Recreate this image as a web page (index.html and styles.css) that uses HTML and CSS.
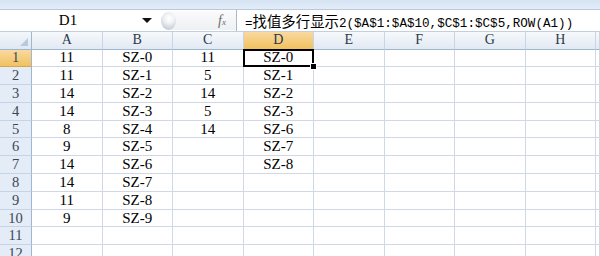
FILE: index.html
```html
<!DOCTYPE html>
<html lang="zh-CN">
<head>
    <meta charset="UTF-8">
    <meta name="viewport" content="width=device-width, initial-scale=1.0">
    <title>找值多行显示</title>

    <link rel="stylesheet" href="styles.css">
</head>
<body>

    <div class="ribbon"></div>

    <div class="formula-bar">
        <div class="name-box">D1</div>
        <div class="name-arrow"></div>
        <div class="fx-area">
            <span class="grip"></span>
            <span class="fx">f<small>x</small></span>
        </div>
        <div class="formula">=<span class="cjk">找值多行显示</span>2($A$1:$A$10,$C$1:$C$5,ROW(A1))</div>
    </div>

    <div id="sheet" class="sheet"></div> <!-- grid is built below -->

    <script>
        const columns = ['A', 'B', 'C', 'D', 'E', 'F', 'G', 'H', ''];

        // Values by column, row 1 first
        const data = {
            A: [11, 11, 14, 14, 8, 9, 14, 14, 11, 9],
            B: ['SZ-0', 'SZ-1', 'SZ-2', 'SZ-3', 'SZ-4', 'SZ-5', 'SZ-6', 'SZ-7', 'SZ-8', 'SZ-9'],
            C: [11, 5, 14, 5, 14],
            D: ['SZ-0', 'SZ-1', 'SZ-2', 'SZ-3', 'SZ-6', 'SZ-7', 'SZ-8']
        };

        const sheet = document.getElementById('sheet');

        // Header row
        const corner = document.createElement('div');
        corner.className = 'corner';
        sheet.appendChild(corner);

        columns.forEach(col => {
            const head = document.createElement('div');
            head.className = 'col-head' + (col === 'D' ? ' active' : '');
            head.textContent = col;
            sheet.appendChild(head);
        });

        // Data rows
        for (let r = 1; r <= 12; r++) {
            const rowHead = document.createElement('div');
            rowHead.className = 'row-head' + (r === 1 ? ' active' : '');
            rowHead.textContent = r;
            sheet.appendChild(rowHead);

            columns.forEach(col => {
                const cell = document.createElement('div');
                cell.className = 'cell';
                if (col === 'D' && r === 1) cell.className += ' selected';
                const values = data[col];
                if (values && values[r - 1] !== undefined) {
                    cell.textContent = values[r - 1];
                }
                sheet.appendChild(cell);
            });
        }
    </script>
</body>
</html>
```

FILE: styles.css
```css
body {
    font-family: 'Liberation Serif', 'Noto Sans CJK SC', serif;
    margin: 0;
    padding: 0;
    width: 600px;
    height: 256px;
    overflow: hidden;
    background: #fff;
    color: #000;
}

.ribbon {
    height: 9px;
    background: linear-gradient(#d6e3f3, #e3ecf8);
    border-bottom: 1px solid #b9c9dd;
}

.formula-bar {
    display: flex;
    height: 21px;
    background: #fff;
    border-bottom: 1px solid #c4cfdd;
}

.name-box {
    width: 136px;
    text-align: center;
    font-size: 15px;
    line-height: 21px;
}

.name-arrow {
    width: 0;
    height: 0;
    margin: 8px 9px 0 6px;
    border-left: 5px solid transparent;
    border-right: 5px solid transparent;
    border-top: 5px solid #111;
}

.fx-area {
    display: flex;
    align-items: center;
    width: 75px;
    margin: 1px 0;
    background: linear-gradient(#fbfbfc, #eef0f3);
    border-radius: 9px 0 0 9px;
}

.grip {
    width: 15px;
    height: 18px;
    border-radius: 50%;
    background: radial-gradient(circle at 55% 35%, #fff 0, #f2f4f7 30%, #c6ccd5 80%, #aeb6c2 100%);
}

.fx {
    margin-left: 42px;
    font-family: 'Liberation Serif', serif;
    font-style: italic;
    font-size: 14px;
    color: #6d6d6d;
}

.fx small {
    font-size: 9px;
}

.formula {
    flex: 1;
    border-left: 1px solid #a9b8cb;
    padding-left: 8px;
    font-family: 'Liberation Mono', monospace;
    font-size: 12.6px;
    line-height: 21px;
    white-space: nowrap;
}

.cjk {
    font-family: 'Noto Sans CJK SC', sans-serif;
    font-size: 14.4px;
}

.sheet {
    display: grid;
    grid-template-columns: 32px repeat(8, 70.5px) 1fr;
    grid-template-rows: 17.5px;
    grid-auto-rows: 17.8px;
    font-size: 15px;
}

.sheet > div {
    box-sizing: border-box;
    display: flex;
    align-items: center;
    justify-content: center;
    white-space: nowrap;
}

.corner {
    position: relative;
    background: linear-gradient(#f3f7fb, #dfe7f2);
    border-right: 1px solid #9eb6ce;
    border-bottom: 1px solid #9eb6ce;
}

.corner::after {
    content: '';
    position: absolute;
    right: 3px;
    bottom: 3px;
    border-left: 8px solid transparent;
    border-bottom: 8px solid #b9c9dc;
}

.col-head {
    background: linear-gradient(#f6f9fc, #e2e9f3);
    border-right: 1px solid #c9d5e3;
    border-bottom: 1px solid #9eb6ce;
    color: #2b3a4a;
    font-size: 14px;
}

.row-head {
    background: #e4ecf7;
    border-right: 1px solid #9eb6ce;
    border-bottom: 1px solid #c5d3e4;
    color: #3c4756;
    font-size: 14.5px;
}

.col-head.active,
.row-head.active {
    background: linear-gradient(#f9d99f, #f1c15f);
    border-bottom-color: #d9a74a;
}

.cell {
    border-right: 1px solid #d0d7e5;
    border-bottom: 1px solid #d0d7e5;
}

.cell.selected {
    position: relative;
}

.cell.selected::before {
    content: '';
    position: absolute;
    left: -1px;
    top: -1px;
    right: -1px;
    bottom: -1px;
    border: 2px solid #000;
}

.cell.selected::after {
    content: '';
    position: absolute;
    right: -4px;
    bottom: -4px;
    width: 5px;
    height: 5px;
    background: #000;
    border: 1px solid #fff;
}
```
